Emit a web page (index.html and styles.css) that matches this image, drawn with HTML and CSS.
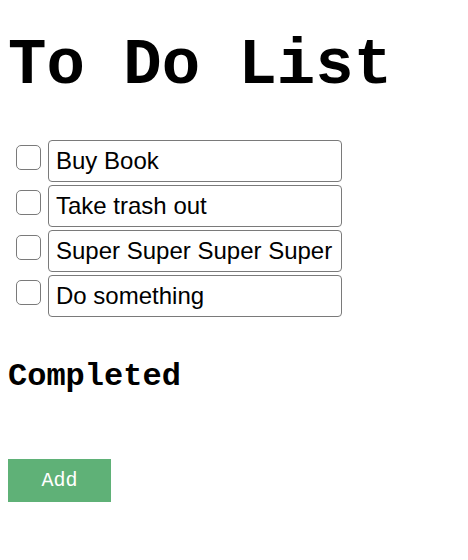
FILE: index.html
```html
<!DOCTYPE html>
<html>
<head>
<meta charset="utf-8">
<link rel="stylesheet" href="styles.css">
</head>
<body>
<h1 class="title">To Do List</h1>
<ul class="todo-list">
  <li class="todo-item"><input type="checkbox" class="todo-check"><input type="text" class="todo-text" value="Buy Book"></li>
  <li class="todo-item"><input type="checkbox" class="todo-check"><input type="text" class="todo-text" value="Take trash out"></li>
  <li class="todo-item"><input type="checkbox" class="todo-check"><input type="text" class="todo-text" value="Super Super Super Super Super"></li>
  <li class="todo-item"><input type="checkbox" class="todo-check"><input type="text" class="todo-text" value="Do something"></li>
</ul>
<h2 class="section-title">Completed</h2>
<button class="add-btn">Add</button>
</body>
</html>
```
FILE: styles.css
```css
body {
  margin: 8px;
  background: #fff;
  font-family: "Liberation Mono", "Courier New", monospace;
}
.title {
  font-family: "Liberation Mono", "Courier New", monospace;
  font-size: 64px;
  font-weight: bold;
  line-height: 72px;
  margin: 22px 0 38px;
  color: #000;
}
.todo-list {
  list-style: none;
  margin: 0;
  padding: 0 0 0 8px;
  display: flex;
  flex-direction: column;
  gap: 3px;
}
.todo-item {
  display: flex;
  align-items: flex-start;
  gap: 7px;
}
.todo-check {
  appearance: none;
  -webkit-appearance: none;
  width: 25px;
  height: 25px;
  margin: 5px 0 0 0;
  border: 1.5px solid #7a7a7a;
  border-radius: 5px;
  background: #fff;
  box-sizing: border-box;
}
.todo-text {
  width: 294px;
  height: 42px;
  box-sizing: border-box;
  border: 1.5px solid #7a7a7a;
  border-radius: 4px;
  padding: 0 7px;
  margin: 0;
  font-family: "Liberation Sans", Arial, sans-serif;
  font-size: 24px;
  color: #000;
  background: #fff;
}
.section-title {
  font-family: "Liberation Mono", "Courier New", monospace;
  font-size: 32px;
  font-weight: bold;
  margin: 42px 0 0;
  line-height: 36px;
  color: #000;
}
.add-btn {
  display: block;
  margin-top: 64px;
  width: 103px;
  height: 43px;
  background: #5fb177;
  color: #fff;
  border: none;
  border-radius: 0;
  font-family: "Liberation Mono", "Courier New", monospace;
  font-size: 20px;
  padding: 0;
}
```
